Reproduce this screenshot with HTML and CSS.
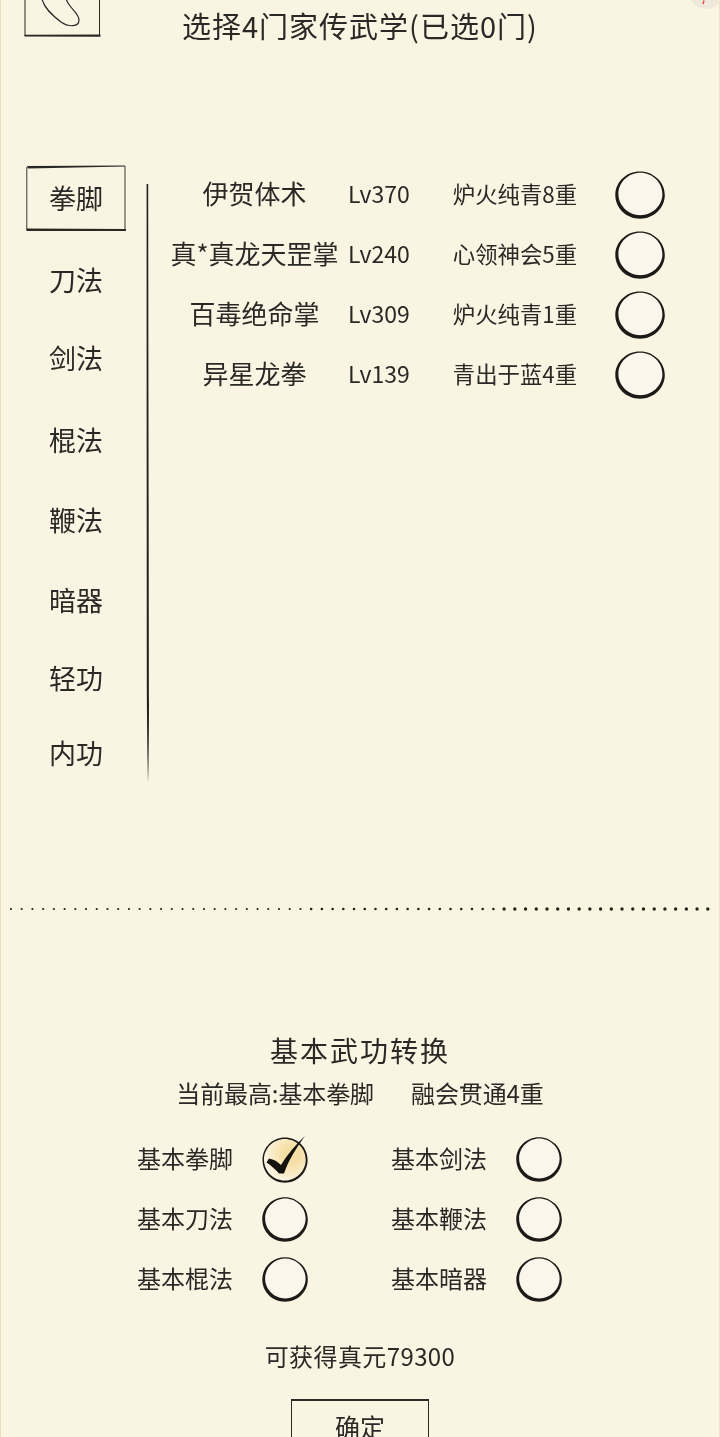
FILE: index.html
```html
<!DOCTYPE html>
<html lang="zh-CN">
<head>
<meta charset="utf-8">
<title>选择家传武学</title>
<link rel="stylesheet" href="styles.css">
</head>
<body>
<svg class="defs" width="0" height="0" aria-hidden="true">
  <symbol id="ring" viewBox="0 0 50 50" preserveAspectRatio="none">
    <circle cx="25" cy="25" r="23" fill="#fbf6ec"/>
    <path fill="#1d1b18" fill-rule="evenodd" d="M25 .4C38.800.4 49.800 11.400 49.800 25S38.800 49.700 25 49.700.3 38.600.3 25 11.200.4 25 .4ZM25.300 1.800C13.200 1.800 3.400 12 3.400 24S13.200 46 25.300 46 47.400 36 47.400 24 37.400 1.800 25.300 1.800Z"/>
    <path stroke="#fbf6ec" stroke-width="1" fill="none" d="M36 2.300 42 6.500"/>
  </symbol>
</svg>
<div class="page">
  <svg class="corner" width="34" height="12" viewBox="0 0 34 12" aria-hidden="true">
    <circle cx="20" cy="-8" r="17" fill="#efe9dc"/>
    <path d="M18 0.500 17 4" stroke="#d9534a" stroke-width="1.500" fill="none"/>
  </svg>

  <header class="top">
    <svg class="avatar" width="78" height="38" viewBox="0 0 78 38" aria-hidden="true">
      <path d="M1 0V36M75.500 0V36" stroke="#2a2825" stroke-width="1" fill="none"/>
      <path d="M.5 34.800 76.500 34.600V36.800L.5 36.400Z" fill="#2a2825"/>
      <path d="M18 -1C20 8 28 15 37 22 45 27.500 55 27 55 20 55 14 48 10 44 3L42 -1" stroke="#2a2825" stroke-width="1.200" fill="none"/>
    </svg>
    <h1 class="title">选择4门家传武学(已选0门)</h1>
  </header>

  <main class="skills">
    <nav class="tabs">
      <div class="tab tab-active">
        <svg class="tab-frame" width="100" height="66" viewBox="0 0 100 66" aria-hidden="true">
          <path d="M1 1 99 0.500V1.500L2 3.500Z" fill="#2a2825"/>
          <path d="M.8 2V65M99 1V65" stroke="#3a3835" stroke-width="1" fill="none"/>
          <path d="M.5 63.500 100 64V66H.5Z" fill="#2a2825"/>
        </svg>
        拳脚
      </div>
      <div class="tab">刀法</div>
      <div class="tab">剑法</div>
      <div class="tab">棍法</div>
      <div class="tab">鞭法</div>
      <div class="tab">暗器</div>
      <div class="tab">轻功</div>
      <div class="tab">内功</div>
    </nav>
    <svg class="rule" width="4" height="600" viewBox="0 0 4 600" aria-hidden="true">
      <path d="M.6 0 2.200 0C2.400 200 2.800 400 3 520 2.900 560 2.500 585 2 599 1.400 570 .9 530 .8 500 .7 340 .6 170 .6 0Z" fill="#24221f"/>
    </svg>
    <div class="list">
      <div class="row">
        <span class="name">伊贺体术</span><span class="lv">Lv370</span><span class="desc">炉火纯青8重</span>
        <svg class="ring" width="50" height="48" aria-hidden="true"><use href="#ring"/></svg>
      </div>
      <div class="row">
        <span class="name">真*真龙天罡掌</span><span class="lv">Lv240</span><span class="desc">心领神会5重</span>
        <svg class="ring" width="50" height="48" aria-hidden="true"><use href="#ring"/></svg>
      </div>
      <div class="row">
        <span class="name">百毒绝命掌</span><span class="lv">Lv309</span><span class="desc">炉火纯青1重</span>
        <svg class="ring" width="50" height="48" aria-hidden="true"><use href="#ring"/></svg>
      </div>
      <div class="row">
        <span class="name">异星龙拳</span><span class="lv">Lv139</span><span class="desc">青出于蓝4重</span>
        <svg class="ring" width="50" height="48" aria-hidden="true"><use href="#ring"/></svg>
      </div>
    </div>
  </main>

  <svg class="dots" width="720" height="6" viewBox="0 0 720 6" aria-hidden="true">
    <g fill="none" stroke="#26241f" stroke-linecap="round">
      <path stroke-width="2.200" stroke-dasharray="0 10.720" d="M11 3H301"/>
      <path stroke-width="2.600" stroke-dasharray="0 10.720" d="M311.160 3H500"/>
      <path stroke-width="3.400" stroke-dasharray="0 10.720" d="M504.120 3H712"/>
    </g>
  </svg>

  <section class="convert">
    <h2 class="convert-title">基本武功转换</h2>
    <p class="current"><span>当前最高:基本拳脚</span><span>融会贯通4重</span></p>
    <div class="options">
      <div class="option">
        <span>基本拳脚</span>
        <svg class="check" width="46" height="46" viewBox="0 0 46 46" aria-hidden="true">
          <defs>
            <radialGradient id="glow" cx="0.65" cy="0.38" r="0.62">
              <stop offset="0.3" stop-color="#f6dfa4"/>
              <stop offset="1" stop-color="#fbf4e0"/>
            </radialGradient>
          </defs>
          <circle cx="23" cy="23" r="21.500" fill="url(#glow)"/>
          <path fill="#1d1b18" fill-rule="evenodd" d="M23 .6C35.600.6 45.600 10.600 45.600 23S35.600 45.700 23 45.700.5 35.400.5 23 10.400.6 23 .6ZM22.700 2C11.400 2 2 11.400 2 22.700S11.400 43.500 22.700 43.500 43.700 34.200 43.700 22.700 34 2 22.700 2Z"/>
          <path fill="#14120f" d="M4.500 25.500 7 21.500C12 22.500 15.500 24.500 19 28 25 18 33 8 43 -1 35 10 27 22 22 36.500L17 36.500C13 32 9 28.500 4.500 25.500Z"/>
        </svg>
      </div>
      <div class="option">
        <span>基本剑法</span>
        <svg class="ring" width="46" height="45" aria-hidden="true"><use href="#ring"/></svg>
      </div>
      <div class="option">
        <span>基本刀法</span>
        <svg class="ring" width="46" height="45" aria-hidden="true"><use href="#ring"/></svg>
      </div>
      <div class="option">
        <span>基本鞭法</span>
        <svg class="ring" width="46" height="45" aria-hidden="true"><use href="#ring"/></svg>
      </div>
      <div class="option">
        <span>基本棍法</span>
        <svg class="ring" width="46" height="45" aria-hidden="true"><use href="#ring"/></svg>
      </div>
      <div class="option">
        <span>基本暗器</span>
        <svg class="ring" width="46" height="45" aria-hidden="true"><use href="#ring"/></svg>
      </div>
    </div>
    <p class="reward">可获得真元79300</p>
    <button class="confirm" type="button">确定</button>
  </section>
</div>
</body>
</html>
```
FILE: styles.css
```css
* { box-sizing: border-box; }
html, body { margin: 0; padding: 0; }
body {
  background: #faf4e3;
  font-family: "Noto Sans CJK SC", "Noto Sans", sans-serif;
  color: #2b2926;
}
.defs { position: absolute; }
.page {
  position: relative;
  width: 720px;
  height: 1437px;
  overflow: hidden;
  background: #faf4e3;
  box-shadow: inset 1px 0 #e9dfc4, inset -1px 0 #ece3ca;
  filter: blur(0.35px);
}
.corner { position: absolute; top: 0; right: 0; }
.top {
  display: flex;
  height: 165px;
  padding-left: 24px;
}
.avatar { flex: none; display: block; }
.title {
  margin: 5px 0 0 80px;
  font-size: 29px;
  font-weight: 400;
  line-height: 40px;
  letter-spacing: 1px;
  white-space: nowrap;
}
.skills {
  display: flex;
  height: 620px;
  padding-left: 26px;
}
.tabs { width: 100px; flex: none; }
.tab {
  position: relative;
  height: 40px;
  font-size: 27px;
  line-height: 40px;
  text-align: center;
}
.tab-active { height: 66px; line-height: 66px; }
.tab-frame { position: absolute; top: 0; left: 0; }
.tab:nth-child(2) { margin-top: 29px; }
.tab:nth-child(3) { margin-top: 38px; }
.tab:nth-child(4) { margin-top: 42px; }
.tab:nth-child(5) { margin-top: 40px; }
.tab:nth-child(6) { margin-top: 40px; }
.tab:nth-child(7) { margin-top: 38px; }
.tab:nth-child(8) { margin-top: 35px; }
.rule { flex: none; margin: 19px 0 0 20px; }
.list { margin: 0 0 0 12px; width: 503px; }
.row {
  display: grid;
  grid-template-columns: 186px 60px 1fr 50px;
  align-items: center;
  height: 60px;
}
.name { font-size: 26px; line-height: 48px; text-align: center; white-space: nowrap; margin-top: -4px; padding-right: 1px; }
.lv { font-size: 23px; line-height: 48px; text-align: center; margin-top: -4px; font-weight: 400; white-space: nowrap; }
.desc { font-size: 22.400px; line-height: 48px; text-align: center; padding-left: 7px; white-space: nowrap; margin-top: -4px; }
.ring { display: block; flex: none; }
.dots { display: block; margin-top: 121px; }
.convert {
  display: flex;
  flex-direction: column;
  align-items: center;
  padding-top: 116px;
}
.convert-title {
  margin: 0;
  font-size: 28px;
  font-weight: 400;
  line-height: 44px;
  letter-spacing: 2px;
}
.current {
  display: flex;
  gap: 37px;
  margin: 0;
  font-size: 24px;
  line-height: 42px;
  letter-spacing: -0.1px;
}
.options {
  display: grid;
  grid-template-columns: 254px 170px;
  row-gap: 14px;
  align-self: flex-start;
  margin: 23px 0 0 137px;
}
.option {
  display: flex;
  align-items: flex-start;
  gap: 29px;
  height: 46px;
  font-size: 24px;
  line-height: 42px;
  white-space: nowrap;
}
.check { display: block; flex: none; overflow: visible; }
.reward {
  margin: 32px 0 0;
  font-size: 24px;
  line-height: 42px;
  letter-spacing: 0.4px;
}
.confirm {
  display: block;
  width: 138px;
  height: 70px;
  margin-top: 22px;
  padding: 0 0 18px;
  background: transparent;
  border: 1px solid #2d2b27;
  border-top-width: 2px;
  border-radius: 0;
  font: inherit;
  font-size: 25px;
  line-height: 36px;
  color: inherit;
  flex: none;
  align-self: center;
}
```
